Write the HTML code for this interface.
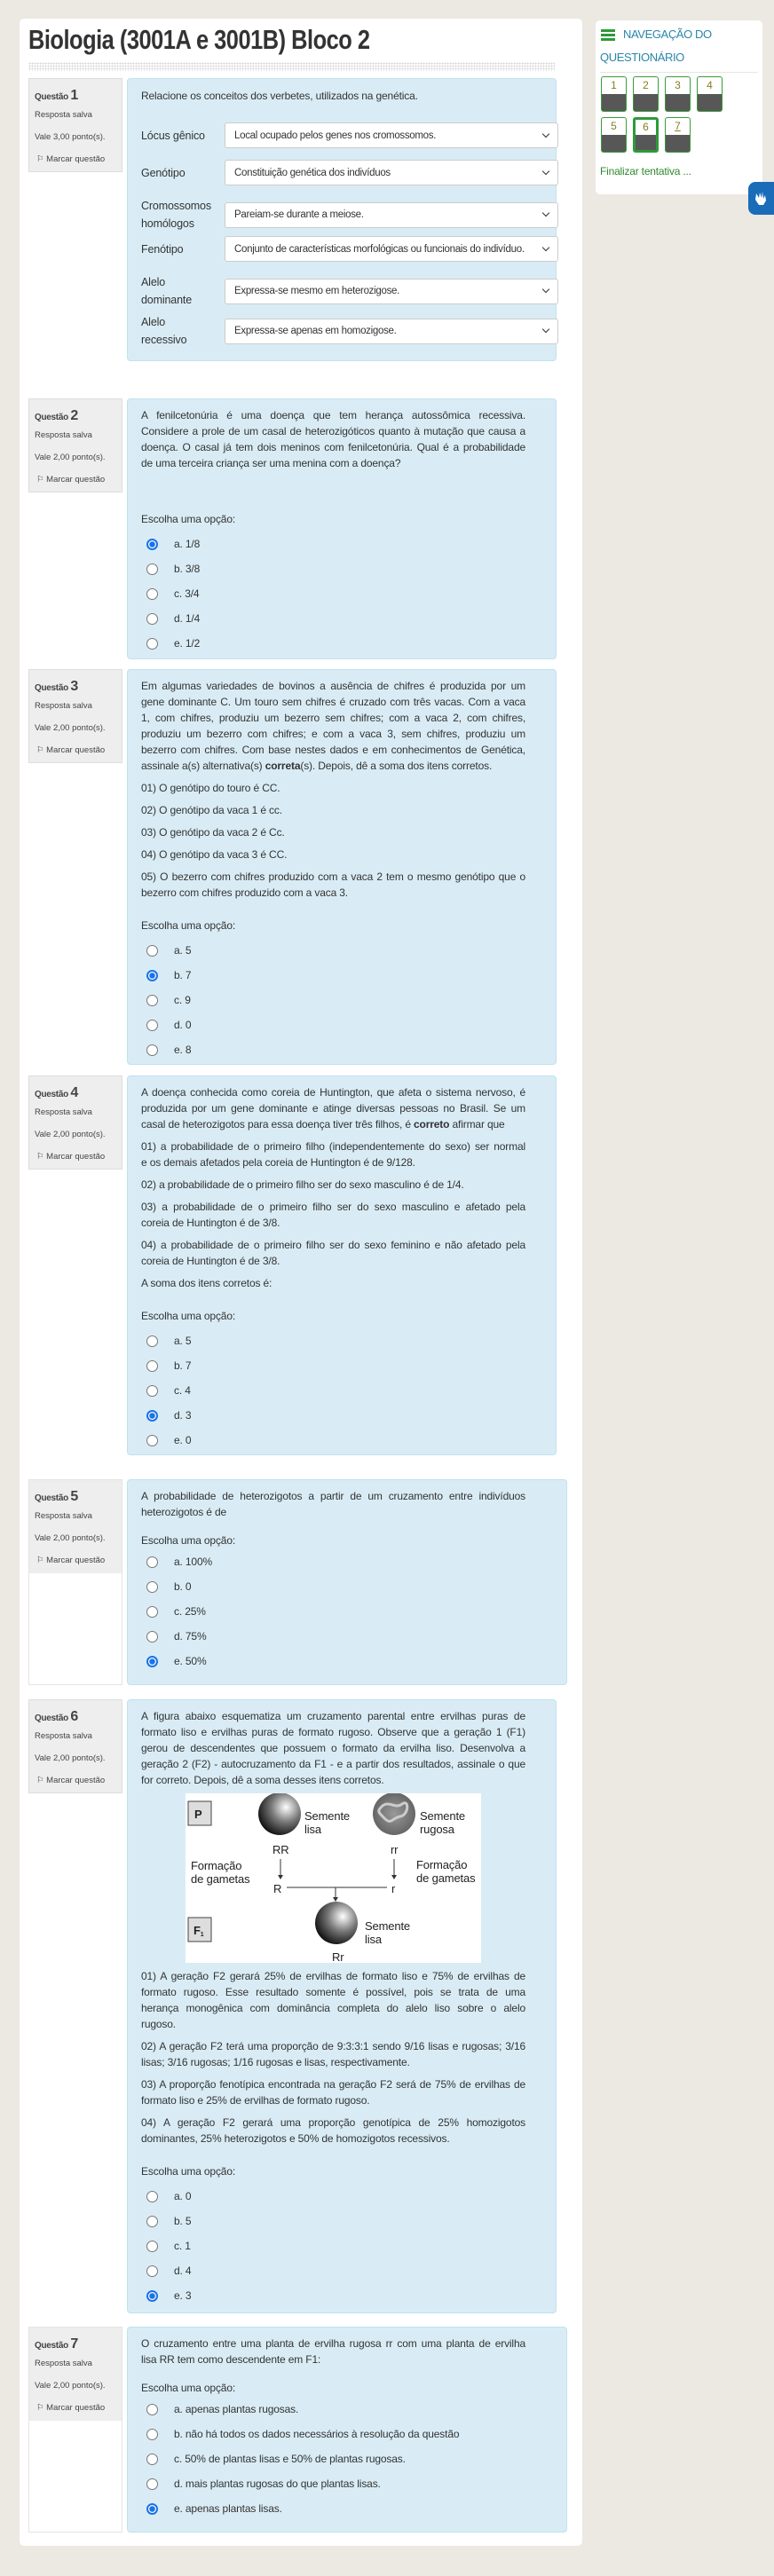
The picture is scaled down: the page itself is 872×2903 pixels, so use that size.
<!DOCTYPE html>
<html><head><meta charset="utf-8">
<style>
*{box-sizing:border-box;margin:0;padding:0}
body{width:872px;height:2903px;background:#ece8e2;font-family:"Liberation Sans",sans-serif;color:#3a3a3a;position:relative;overflow:hidden}
.main{position:absolute;left:22px;top:21px;width:634px;height:2848px;background:#fff;border-radius:5px}
h1{position:absolute;left:10px;top:6px;font-size:31px;font-weight:bold;color:#333;transform:scaleX(0.82);transform-origin:left top;white-space:nowrap;letter-spacing:-0.6px}
.dots{position:absolute;left:10px;top:49px;width:593px;height:10px;background-image:radial-gradient(#d6d6d6 0.8px,transparent 1px);background-size:3px 3px}
.info{position:absolute;left:32px;width:106px;height:106px;background:#eee;border:1px solid #ddd;font-size:9.5px;color:#444;padding:10px 0 0 6px}
.info .qn{font-weight:bold;font-size:10px;letter-spacing:-0.3px}
.info .qn b{font-size:16px;font-weight:bold}
.info div{height:25px}
.info .flag{padding-left:2px}
.box{position:absolute;left:143px;width:484px;background:#d9ecf5;border:1px solid #c0e2ee;border-radius:4px;padding:9px 34px 0 15px;font-size:12px;letter-spacing:-0.15px;line-height:18px;color:#333}
.box p{margin-bottom:7px}
.box p span{display:block;white-space:nowrap}
.j{text-align:justify;text-align-last:justify}
.esc{margin-top:19px;margin-bottom:5px}
.opt{height:28px;display:flex;align-items:center;padding-left:6px}
.r{width:13px;height:13px;border-radius:50%;border:1px solid #777;background:#fff;margin-right:18px;flex:none}
.r.c{border:2px solid #1a73e8;background:radial-gradient(#1a73e8 0 3px,#fff 3.5px)}
.row{position:absolute;left:15px;display:flex;align-items:center;width:470px}
.row .lb{width:94px;padding-right:14px;font-size:12.5px;line-height:20px}
.sel{width:376px;height:29px;background:#fff;border:1px solid #ccc;border-radius:3px;font-size:11.5px;padding:0 10px;display:flex;align-items:center;justify-content:space-between;white-space:nowrap;letter-spacing:-0.3px}
.sel:after{content:"";width:5px;height:5px;border-right:1.5px solid #333;border-bottom:1.5px solid #333;transform:rotate(45deg);margin-top:-4px}
.side{position:absolute;left:671px;top:23px;width:188px;height:196px;background:#fff;border-radius:5px}
.nb{position:absolute;width:29px;height:40px;border:1px solid #3a9a3a;border-radius:3px;background:linear-gradient(#fff 0 19px,#575757 19px);text-align:center;font-size:12px;line-height:18px;color:#8a7a20}
</style></head><body>
<div class="main">
<h1>Biologia (3001A e 3001B) Bloco 2</h1>
<div class="dots"></div>
</div>

<div class="side">
<svg style="position:absolute;left:6px;top:10px" width="16" height="13"><rect y="0" width="16" height="3" fill="#2e9a3a"/><rect y="5" width="16" height="3" fill="#2e9a3a"/><rect y="10" width="16" height="3" fill="#2e9a3a"/></svg>
<div style="position:absolute;left:31px;top:8px;font-size:13px;color:#2a86a8;letter-spacing:-0.4px">NAVEGAÇÃO DO</div>
<div style="position:absolute;left:5px;top:34px;font-size:13px;color:#2a86a8;letter-spacing:-0.4px">QUESTIONÁRIO</div>
<div style="position:absolute;left:5px;top:58px;width:178px;height:1px;background:#e6e6e6"></div>
<div class="nb" style="left:6px;top:63px">1</div>
<div class="nb" style="left:42px;top:63px">2</div>
<div class="nb" style="left:78px;top:63px">3</div>
<div class="nb" style="left:114px;top:63px">4</div>
<div class="nb" style="left:6px;top:109px">5</div>
<div class="nb" style="left:42px;top:109px;border:3px solid #2e9a3a;line-height:16px;background:linear-gradient(#fff 0 17px,#575757 17px)">6</div>
<div class="nb" style="left:78px;top:109px;text-decoration:underline">7</div>
<div style="position:absolute;left:5px;top:163px;font-size:12px;color:#2e8a2e;letter-spacing:-0.2px">Finalizar tentativa ...</div>
</div>
<div style="position:absolute;left:843px;top:205px;width:29px;height:37px;background:#1a6bb8;border-radius:8px 0 0 8px"><svg width="29" height="37"><path d="M9 13l3 5 1-6 2 6 1-7 1 8 2-4 1 6-3 5h-5l-4-6z" fill="#fff"/></svg></div>

<div class="info" style="top:88px"><div class="qn">Questão <b>1</b></div><div>Resposta salva</div><div>Vale 3,00 ponto(s).</div><div class="flag">⚐ Marcar questão</div></div>
<div class="box" style="top:88px;height:319px">
<p style="margin-top:1px">Relacione os conceitos dos verbetes, utilizados na genética.</p>
<div class="row" style="top:49px"><div class="lb">Lócus gênico</div><div class="sel">Local ocupado pelos genes nos cromossomos.</div></div>
<div class="row" style="top:91px"><div class="lb">Genótipo</div><div class="sel">Constituição genética dos indivíduos</div></div>
<div class="row" style="top:133px"><div class="lb">Cromossomos homólogos</div><div class="sel">Pareiam-se durante a meiose.</div></div>
<div class="row" style="top:177px"><div class="lb">Fenótipo</div><div class="sel">Conjunto de características morfológicas ou funcionais do indivíduo.</div></div>
<div class="row" style="top:219px"><div class="lb">Alelo dominante</div><div class="sel">Expressa-se mesmo em heterozigose.</div></div>
<div class="row" style="top:264px"><div class="lb">Alelo recessivo</div><div class="sel">Expressa-se apenas em homozigose.</div></div>
</div>

<div class="info" style="top:449px"><div class="qn">Questão <b>2</b></div><div>Resposta salva</div><div>Vale 2,00 ponto(s).</div><div class="flag">⚐ Marcar questão</div></div>
<div class="box" style="top:449px;height:294px">
<p><span class="j">A fenilcetonúria é uma doença que tem herança autossômica recessiva.</span><span class="j">Considere a prole de um casal de heterozigóticos quanto à mutação que causa a</span><span class="j">doença. O casal já tem dois meninos com fenilcetonúria. Qual é a probabilidade</span><span>de uma terceira criança ser uma menina com a doença?</span></p>
<div class="esc" style="margin-top:45px">Escolha uma opção:</div>
<div class="opt"><i class="r c"></i>a. 1/8</div><div class="opt"><i class="r"></i>b. 3/8</div><div class="opt"><i class="r"></i>c. 3/4</div><div class="opt"><i class="r"></i>d. 1/4</div><div class="opt"><i class="r"></i>e. 1/2</div>
</div>

<div class="info" style="top:754px"><div class="qn">Questão <b>3</b></div><div>Resposta salva</div><div>Vale 2,00 ponto(s).</div><div class="flag">⚐ Marcar questão</div></div>
<div class="box" style="top:754px;height:446px">
<p><span class="j">Em algumas variedades de bovinos a ausência de chifres é produzida por um</span><span class="j">gene dominante C. Um touro sem chifres é cruzado com três vacas. Com a vaca</span><span class="j">1, com chifres, produziu um bezerro sem chifres; com a vaca 2, com chifres,</span><span class="j">produziu um bezerro com chifres; e com a vaca 3, sem chifres, produziu um</span><span class="j">bezerro com chifres. Com base nestes dados e em conhecimentos de Genética,</span><span>assinale a(s) alternativa(s) <b>correta</b>(s). Depois, dê a soma dos itens corretos.</span></p>
<p>01) O genótipo do touro é CC.</p><p>02) O genótipo da vaca 1 é cc.</p><p>03) O genótipo da vaca 2 é Cc.</p><p>04) O genótipo da vaca 3 é CC.</p>
<p><span class="j">05) O bezerro com chifres produzido com a vaca 2 tem o mesmo genótipo que o</span><span>bezerro com chifres produzido com a vaca 3.</span></p>
<div class="esc">Escolha uma opção:</div>
<div class="opt"><i class="r"></i>a. 5</div><div class="opt"><i class="r c"></i>b. 7</div><div class="opt"><i class="r"></i>c. 9</div><div class="opt"><i class="r"></i>d. 0</div><div class="opt"><i class="r"></i>e. 8</div>
</div>

<div class="info" style="top:1212px"><div class="qn">Questão <b>4</b></div><div>Resposta salva</div><div>Vale 2,00 ponto(s).</div><div class="flag">⚐ Marcar questão</div></div>
<div class="box" style="top:1212px;height:428px">
<p><span class="j">A doença conhecida como coreia de Huntington, que afeta o sistema nervoso, é</span><span class="j">produzida por um gene dominante e atinge diversas pessoas no Brasil. Se um</span><span>casal de heterozigotos para essa doença tiver três filhos, é <b>correto</b> afirmar que</span></p>
<p><span class="j">01) a probabilidade de o primeiro filho (independentemente do sexo) ser normal</span><span>e os demais afetados pela coreia de Huntington é de 9/128.</span></p>
<p>02) a probabilidade de o primeiro filho ser do sexo masculino é de 1/4.</p>
<p><span class="j">03) a probabilidade de o primeiro filho ser do sexo masculino e afetado pela</span><span>coreia de Huntington é de 3/8.</span></p>
<p><span class="j">04) a probabilidade de o primeiro filho ser do sexo feminino e não afetado pela</span><span>coreia de Huntington é de 3/8.</span></p>
<p>A soma dos itens corretos é:</p>
<div class="esc">Escolha uma opção:</div>
<div class="opt"><i class="r"></i>a. 5</div><div class="opt"><i class="r"></i>b. 7</div><div class="opt"><i class="r"></i>c. 4</div><div class="opt"><i class="r c"></i>d. 3</div><div class="opt"><i class="r"></i>e. 0</div>
</div>

<div class="info" style="top:1667px;height:232px;background:linear-gradient(#eee 0 105px,#fff 105px);border-color:#e4e4e4"><div class="qn">Questão <b>5</b></div><div>Resposta salva</div><div>Vale 2,00 ponto(s).</div><div class="flag">⚐ Marcar questão</div></div>
<div class="box" style="top:1667px;height:232px;width:496px;padding-right:46px">
<p><span class="j">A probabilidade de heterozigotos a partir de um cruzamento entre indivíduos</span><span>heterozigotos é de</span></p>
<div class="esc" style="margin-top:14px;margin-bottom:1px">Escolha uma opção:</div>
<div class="opt"><i class="r"></i>a. 100%</div><div class="opt"><i class="r"></i>b. 0</div><div class="opt"><i class="r"></i>c. 25%</div><div class="opt"><i class="r"></i>d. 75%</div><div class="opt"><i class="r c"></i>e. 50%</div>
</div>

<div class="info" style="top:1915px"><div class="qn">Questão <b>6</b></div><div>Resposta salva</div><div>Vale 2,00 ponto(s).</div><div class="flag">⚐ Marcar questão</div></div>
<div class="box" style="top:1915px;height:692px">
<p style="margin-bottom:6px"><span class="j">A figura abaixo esquematiza um cruzamento parental entre ervilhas puras de</span><span class="j">formato liso e ervilhas puras de formato rugoso. Observe que a geração 1 (F1)</span><span class="j">gerou de descendentes que possuem o formato da ervilha liso. Desenvolva a</span><span class="j">geração 2 (F2) - autocruzamento da F1 - e a partir dos resultados, assinale o que</span><span>for correto. Depois, dê a soma desses itens corretos.</span></p>
<svg width="333" height="191" style="display:block;margin:0 0 6px 50px;background:#fff" font-family="Liberation Sans, sans-serif" font-size="13" fill="#222">
<defs><radialGradient id="g" cx="0.65" cy="0.35" r="0.7"><stop offset="0" stop-color="#fff"/><stop offset="0.5" stop-color="#777"/><stop offset="1" stop-color="#111"/></radialGradient>
<radialGradient id="g2"><stop offset="0" stop-color="#999"/><stop offset="1" stop-color="#666"/></radialGradient></defs>
<rect x="3" y="9" width="26" height="27" fill="#ddd" stroke="#444"/><text x="10" y="28" font-weight="bold">P</text>
<circle cx="106" cy="23" r="24" fill="url(#g)"/>
<text x="134" y="30">Semente</text><text x="134" y="45">lisa</text>
<circle cx="235" cy="23" r="24" fill="url(#g2)"/><path d="M222 14c8-6 14 4 22-2s8 12-2 14-10 10-18 2-8-8-2-14z" fill="none" stroke="#ccc" stroke-width="3"/>
<text x="264" y="30">Semente</text><text x="264" y="45">rugosa</text>
<text x="98" y="68">RR</text><text x="231" y="68">rr</text>
<text x="6" y="86">Formação</text><text x="6" y="101">de gametas</text>
<text x="260" y="85">Formação</text><text x="260" y="100">de gametas</text>
<path d="M107 74v19M235 74v19M169 106v12M114 106h113" stroke="#333"/>
<path d="M104 92l3 5 3-5zM232 92l3 5 3-5zM166 117l3 5 3-5z" fill="#333"/>
<text x="99" y="112">R</text><text x="232" y="112">r</text>
<rect x="3" y="140" width="26" height="27" fill="#ddd" stroke="#444"/><text x="9" y="159" font-weight="bold">F<tspan font-size="7" dy="2">1</tspan></text>
<circle cx="170" cy="146" r="24" fill="url(#g)"/>
<text x="202" y="154">Semente</text><text x="202" y="169">lisa</text><text x="165" y="189">Rr</text>
</svg>
<p><span class="j">01) A geração F2 gerará 25% de ervilhas de formato liso e 75% de ervilhas de</span><span class="j">formato rugoso. Esse resultado somente é possível, pois se trata de uma</span><span class="j">herança monogênica com dominância completa do alelo liso sobre o alelo</span><span>rugoso.</span></p>
<p><span class="j">02) A geração F2 terá uma proporção de 9:3:3:1 sendo 9/16 lisas e rugosas; 3/16</span><span>lisas; 3/16 rugosas; 1/16 rugosas e lisas, respectivamente.</span></p>
<p><span class="j">03) A proporção fenotípica encontrada na geração F2 será de 75% de ervilhas de</span><span>formato liso e 25% de ervilhas de formato rugoso.</span></p>
<p><span class="j">04) A geração F2 gerará uma proporção genotípica de 25% homozigotos</span><span>dominantes, 25% heterozigotos e 50% de homozigotos recessivos.</span></p>
<div class="esc">Escolha uma opção:</div>
<div class="opt"><i class="r"></i>a. 0</div><div class="opt"><i class="r"></i>b. 5</div><div class="opt"><i class="r"></i>c. 1</div><div class="opt"><i class="r"></i>d. 4</div><div class="opt"><i class="r c"></i>e. 3</div>
</div>

<div class="info" style="top:2622px;height:232px;background:linear-gradient(#eee 0 105px,#fff 105px);border-color:#e4e4e4"><div class="qn">Questão <b>7</b></div><div>Resposta salva</div><div>Vale 2,00 ponto(s).</div><div class="flag">⚐ Marcar questão</div></div>
<div class="box" style="top:2622px;height:232px;width:496px;padding-right:46px">
<p><span class="j">O cruzamento entre uma planta de ervilha rugosa rr com uma planta de ervilha</span><span>lisa RR tem como descendente em F1:</span></p>
<div class="esc" style="margin-top:14px;margin-bottom:1px">Escolha uma opção:</div>
<div class="opt"><i class="r"></i>a. apenas plantas rugosas.</div><div class="opt"><i class="r"></i>b. não há todos os dados necessários à resolução da questão</div><div class="opt"><i class="r"></i>c. 50% de plantas lisas e 50% de plantas rugosas.</div><div class="opt"><i class="r"></i>d. mais plantas rugosas do que plantas lisas.</div><div class="opt"><i class="r c"></i>e. apenas plantas lisas.</div>
</div>
</body></html>
